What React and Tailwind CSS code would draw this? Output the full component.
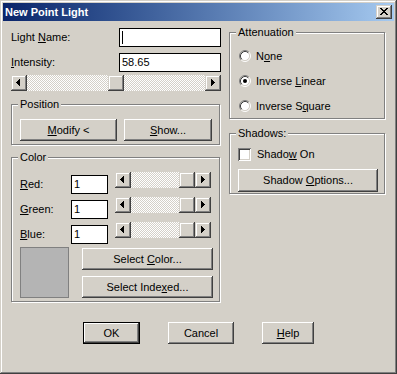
const raised =
  "bg-[#d4d0c8] shadow-[inset_-1px_-1px_#404040,inset_1px_1px_#fff,inset_-2px_-2px_#808080,inset_2px_2px_#d4d0c8]";
const raisedScroll =
  "bg-[#d4d0c8] shadow-[inset_-1px_-1px_#404040,inset_1px_1px_#d4d0c8,inset_-2px_-2px_#808080,inset_2px_2px_#fff]";
const sunken =
  "bg-white shadow-[inset_1px_1px_#808080,inset_-1px_-1px_#fff,inset_2px_2px_#404040,inset_-2px_-2px_#d4d0c8]";
const dither =
  "bg-[image:repeating-conic-gradient(#fff_0_25%,#d4d0c8_0_50%)] bg-[length:2px_2px]";

// pixel glyphs, drawn 1px at a time so they stay crisp
function pix(rows, ox, oy) {
  let d = "";
  rows.forEach((r, y) =>
    [...r].forEach((c, x) => {
      if (c === "#") d += `M${ox + x} ${oy + y}h1v1h-1z`;
    })
  );
  return d;
}

const CLOSE_X = ["##....##", ".##..##.", "..####..", "...##...", "..####..", ".##..##.", "##....##"];
const LEFT = ["...#", "..##", ".###", "####", ".###", "..##", "...#"];
const RIGHT = ["#...", "##..", "###.", "####", "###.", "##..", "#..."];

function Arrow({ dir }) {
  return (
    <div className={`w-[16px] h-[16px] shrink-0 ${raisedScroll}`}>
      <svg width="16" height="16" shapeRendering="crispEdges">
        <path d={dir === "left" ? pix(LEFT, 5, 4) : pix(RIGHT, 6, 4)} fill="#000" />
      </svg>
    </div>
  );
}

function Scroll({ w, thumbAt }) {
  return (
    <div className="flex h-[16px]" style={{ width: w }}>
      <Arrow dir="left" />
      <div className="flex flex-1 min-w-0">
        <div className={`h-[16px] ${dither}`} style={{ width: thumbAt }} />
        <div className={`w-[16px] h-[16px] shrink-0 ${raisedScroll}`} />
        <div className={`h-[16px] flex-1 ${dither}`} />
      </div>
      <Arrow dir="right" />
    </div>
  );
}

function Btn({ children, w, h = 22, isDefault }) {
  if (isDefault) {
    return (
      <div className="border border-black" style={{ width: w, height: h }}>
        <div className={`w-full h-full flex items-center justify-center ${raised}`}>{children}</div>
      </div>
    );
  }
  return (
    <div className={`flex items-center justify-center shrink-0 ${raised}`} style={{ width: w, height: h }}>
      {children}
    </div>
  );
}

function Field({ w, h = 19, children }) {
  return (
    <div className="bg-white border border-black flex items-center pl-[2px] shrink-0" style={{ width: w, height: h }}>
      {children}
    </div>
  );
}

function Group({ label, className, children }) {
  return (
    <div className={`relative border border-[#808080] shadow-[inset_1px_1px_#fff,1px_1px_#fff] ${className}`}>
      <span className="absolute left-[6px] -top-[7px] px-[2px] bg-[#d4d0c8] leading-[13px]">{label}</span>
      {children}
    </div>
  );
}

function Radio({ checked, children }) {
  return (
    <div className="flex items-center gap-[5px] h-[12px]">
      <svg width="12" height="12" viewBox="0 0 12 12" className="shrink-0">
        <circle cx="6" cy="6" r="4.5" fill="#fff" />
        <path d="M2.11 9.89A5.5 5.5 0 0 1 9.89 2.11" stroke="#808080" fill="none" />
        <path d="M9.89 2.11A5.5 5.5 0 0 1 2.11 9.89" stroke="#fff" fill="none" />
        <path d="M2.82 9.18A4.5 4.5 0 0 1 9.18 2.82" stroke="#404040" fill="none" />
        <path d="M9.18 2.82A4.5 4.5 0 0 1 2.82 9.18" stroke="#d4d0c8" fill="none" />
        {checked && <circle cx="6" cy="6" r="2" fill="#000" />}
      </svg>
      <span>{children}</span>
    </div>
  );
}

function ColorRow({ label }) {
  return (
    <div className="flex items-start h-[25px]">
      <div className="w-[51px] h-[19px] mt-[3px] flex items-center">{label}</div>
      <div className="mt-[3px]">
        <Field w={37}>1</Field>
      </div>
      <div className="ml-[7px]">
        <Scroll w={96} thumbAt={48} />
      </div>
    </div>
  );
}

export default function App() {
  return (
    <div className="w-[397px] h-[374px] bg-[#d4d0c8] p-[3px] flex flex-col text-[11px] leading-[13px] text-black font-['Liberation_Sans',Arial,sans-serif] shadow-[inset_-1px_-1px_#404040,inset_1px_1px_#d4d0c8,inset_-2px_-2px_#808080,inset_2px_2px_#fff]">
      {/* Title bar */}
      <div className="h-[18px] flex items-center pl-[2px] pr-[2px] bg-linear-to-r from-[#0a246a] to-[#a6caf0]">
        <span className="text-white font-bold">New Point Light</span>
        <div className={`ml-auto w-[16px] h-[14px] ${raisedScroll}`}>
          <svg width="16" height="14" shapeRendering="crispEdges">
            <path d={pix(CLOSE_X, 4, 3)} fill="#000" />
          </svg>
        </div>
      </div>

      {/* Body */}
      <div className="flex pl-[8px]">
        <div className="w-[210px] flex flex-col">
          <div className="mt-[7px] flex items-center h-[19px]">
            <div className="w-[108px]">
              Light <u>N</u>ame:
            </div>
            <Field w={102}>
              <span className="w-px h-[13px] bg-black" />
            </Field>
          </div>
          <div className="mt-[6px] flex items-center h-[19px]">
            <div className="w-[108px]">
              <u>I</u>ntensity:
            </div>
            <Field w={102}>58.65</Field>
          </div>
          <div className="mt-[3px]">
            <Scroll w={210} thumbAt={81} />
          </div>

          <Group label="Position" className="mt-[13px] w-[209px] h-[41px] pt-[14px] pl-[8px]">
            <div className="flex gap-[7px]">
              <Btn w={97}>
                <span>
                  <u>M</u>odify &lt;
                </span>
              </Btn>
              <Btn w={88}>
                <span>
                  <u>S</u>how...
                </span>
              </Btn>
            </div>
          </Group>

          <Group label="Color" className="mt-[12px] w-[209px] h-[145px] pt-[14px] pl-[8px]">
            <ColorRow label={<span><u>R</u>ed:</span>} />
            <ColorRow label={<span><u>G</u>reen:</span>} />
            <ColorRow label={<span><u>B</u>lue:</span>} />
            <div className="flex">
              <div className="w-[49px] h-[51px] border border-[#808080] bg-[#b4b4b4]" />
              <div className="ml-[13px] mt-[1px] flex flex-col gap-[6px]">
                <Btn w={131}>
                  <span>
                    Select <u>C</u>olor...
                  </span>
                </Btn>
                <Btn w={131}>
                  <span>
                    Select Inde<u>x</u>ed...
                  </span>
                </Btn>
              </div>
            </div>
          </Group>
        </div>

        <div className="w-[156px] ml-[8px] flex flex-col">
          <Group label="Attenuation" className="mt-[11px] h-[87px] pt-[17px] pl-[9px] flex flex-col gap-[13px]">
            <Radio>
              N<u>o</u>ne
            </Radio>
            <Radio checked>
              Inverse <u>L</u>inear
            </Radio>
            <Radio>
              Inverse S<u>q</u>uare
            </Radio>
          </Group>

          <Group label="Shadows:" className="mt-[14px] h-[61px] pt-[14px] pl-[8px]">
            <div className="flex items-center gap-[6px] h-[13px]">
              <div className={`w-[13px] h-[13px] ${sunken}`} />
              <span>
                Shado<u>w</u> On
              </span>
            </div>
            <div className="mt-[8px]">
              <Btn w={140} h={23}>
                <span>
                  Shadow <u>O</u>ptions...
                </span>
              </Btn>
            </div>
          </Group>
        </div>
      </div>

      {/* Dialog buttons */}
      <div className="mt-[20px] pl-[80px] flex gap-[28px]">
        <Btn w={57} isDefault>
          OK
        </Btn>
        <Btn w={66}>Cancel</Btn>
        <Btn w={52}>
          <span>
            <u>H</u>elp
          </span>
        </Btn>
      </div>
    </div>
  );
}
